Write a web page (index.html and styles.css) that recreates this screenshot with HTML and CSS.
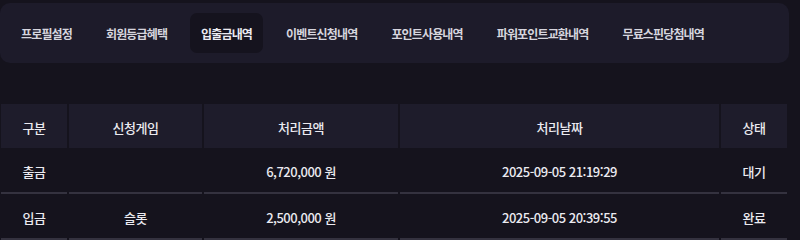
FILE: index.html
```html
<!DOCTYPE html>
<html lang="ko">
<head>
<meta charset="utf-8">
<link rel="stylesheet" href="styles.css">
</head>
<body>
<div class="page">
  <nav class="tabs">
    <a class="tab">프로필설정</a>
    <a class="tab">회원등급혜택</a>
    <a class="tab active">입출금내역</a>
    <a class="tab">이벤트신청내역</a>
    <a class="tab">포인트사용내역</a>
    <a class="tab">파워포인트교환내역</a>
    <a class="tab">무료스핀당첨내역</a>
  </nav>
  <table class="history">
    <colgroup>
      <col class="c1"><col class="c2"><col class="c3"><col class="c4"><col class="c5">
    </colgroup>
    <thead>
      <tr><th>구분</th><th>신청게임</th><th>처리금액</th><th>처리날짜</th><th>상태</th></tr>
    </thead>
    <tbody>
      <tr><td>출금</td><td></td><td>6,720,000 원</td><td>2025-09-05 21:19:29</td><td>대기</td></tr>
      <tr><td>입금</td><td>슬롯</td><td>2,500,000 원</td><td>2025-09-05 20:39:55</td><td>완료</td></tr>
    </tbody>
  </table>
</div>
</body>
</html>
```
FILE: styles.css
```css
html, body {
  margin: 0;
  padding: 0;
  background: #15131d;
  font-family: "Noto Sans CJK KR", "Noto Sans", sans-serif;
  color: #e9e8ee;
}
.page {
  padding-top: 3px;
  width: 789px;
}
.tabs {
  display: flex;
  align-items: center;
  gap: 12px;
  height: 40px;
  padding: 10px 10px;
  background: #1d1b2a;
  border-radius: 10px;
}
.tab {
  display: flex;
  align-items: center;
  height: 40px;
  padding: 1px 11px 0;
  box-sizing: border-box;
  border-radius: 7px;
  font-size: 12px;
  font-weight: 700;
  letter-spacing: -0.85px;
  color: #d6d5de;
  white-space: nowrap;
}
.tab.active {
  background: #15131e;
  color: #ecebf2;
}
.history {
  margin: 41px -1px 0;
  border-collapse: separate;
  border-spacing: 2px 0;
  table-layout: fixed;
  width: 790px;
}
.c1 { width: 66px; }
.c2 { width: 133px; }
.c3 { width: 194px; }
.c4 { width: 319px; }
.c5 { width: 66px; }
.history th, .history td {
  padding: 2px 0 0;
  text-align: center;
  font-size: 13px;
  letter-spacing: -0.5px;
  font-weight: 500;
  color: #ebeaf0;
}
.history th {
  height: 44px;
  box-sizing: border-box;
  background: #1e1c2b;
}
.history td {
  height: 46px;
  box-sizing: border-box;
  border-bottom: 2px solid #34323f;
}
```
